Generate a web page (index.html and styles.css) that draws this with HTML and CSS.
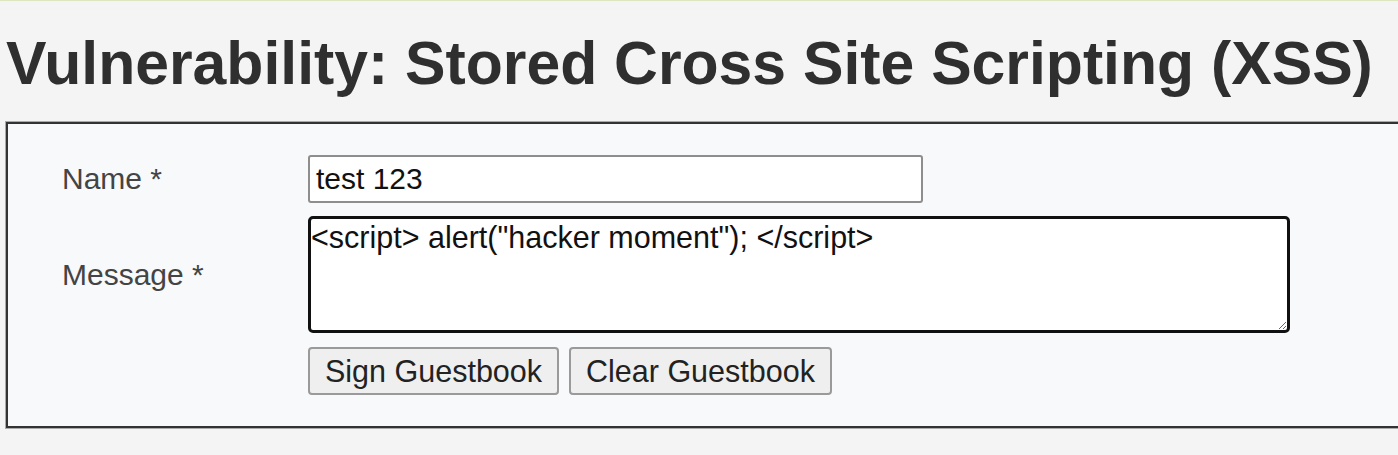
FILE: index.html
```html
<!DOCTYPE html>
<html>
<head>
<meta charset="utf-8">
<link rel="stylesheet" href="styles.css">
</head>
<body>
<div class="page">
  <h1 class="title">Vulnerability: Stored Cross Site Scripting (XSS)</h1>
  <div class="vulnerable-code">
    <form class="guestbook" name="guestform">
      <label class="label" for="txtName">Name *</label>
      <div class="field"><input class="name-input" id="txtName" type="text" value="test 123"></div>
      <label class="label" for="mtxMessage">Message *</label>
      <div class="field"><textarea class="message" id="mtxMessage">&lt;script&gt; alert("hacker moment"); &lt;/script&gt;</textarea></div>
      <div></div>
      <div class="buttons">
        <button class="btn" type="button">Sign Guestbook</button>
        <button class="btn" type="button">Clear Guestbook</button>
      </div>
    </form>
  </div>
</div>
</body>
</html>
```
FILE: styles.css
```css
html, body {
  margin: 0;
  padding: 0;
  overflow: hidden;
}
body {
  background: #f4f4f4;
  border-top: 1px solid #dde6bd;
  font-family: "Liberation Sans", Arial, sans-serif;
  color: #333;
  height: 454px;
}
.page {
  padding-left: 6px;
}
.title {
  margin: 0;
  padding: 26.5px 0 0 0;
  font-size: 60.7px;
  line-height: 70px;
  font-weight: bold;
  color: #2f2f2f;
  white-space: nowrap;
}
.vulnerable-code {
  margin-top: 24.5px;
  width: 1420px;
  border: 2px solid #333;
  box-shadow: 0 0 0 1px #aaa;
  background: #f8f9fa;
  box-sizing: border-box;
}
.guestbook {
  display: grid;
  grid-template-columns: 246px 1fr;
  row-gap: 13px;
  padding: 31px 0 31px 54px;
  align-items: center;
}
.label {
  font-size: 30px;
  color: #444;
}
.field {
  display: flex;
}
.name-input {
  width: 615px;
  height: 48px;
  box-sizing: border-box;
  border: 2px solid #8e8e8e;
  border-radius: 3px;
  padding: 0 6px;
  font-family: "Liberation Sans", Arial, sans-serif;
  font-size: 30px;
  color: #111;
  background: #fff;
}
.message {
  width: 982px;
  height: 117px;
  box-sizing: border-box;
  border: 3px solid #111;
  border-radius: 5px;
  padding: 0;
  font-family: "Liberation Sans", Arial, sans-serif;
  font-size: 30.5px;
  line-height: 36px;
  color: #111;
  background: #fff;
  outline: none;
}
.buttons {
  display: flex;
  gap: 10px;
  margin-top: 1px;
}
.btn {
  height: 48px;
  box-sizing: border-box;
  border: 2px solid #9a9a9a;
  border-radius: 4px;
  background: #efefef;
  font-family: "Liberation Sans", Arial, sans-serif;
  font-size: 30.5px;
  color: #222;
  padding: 0 15px;
}
```
